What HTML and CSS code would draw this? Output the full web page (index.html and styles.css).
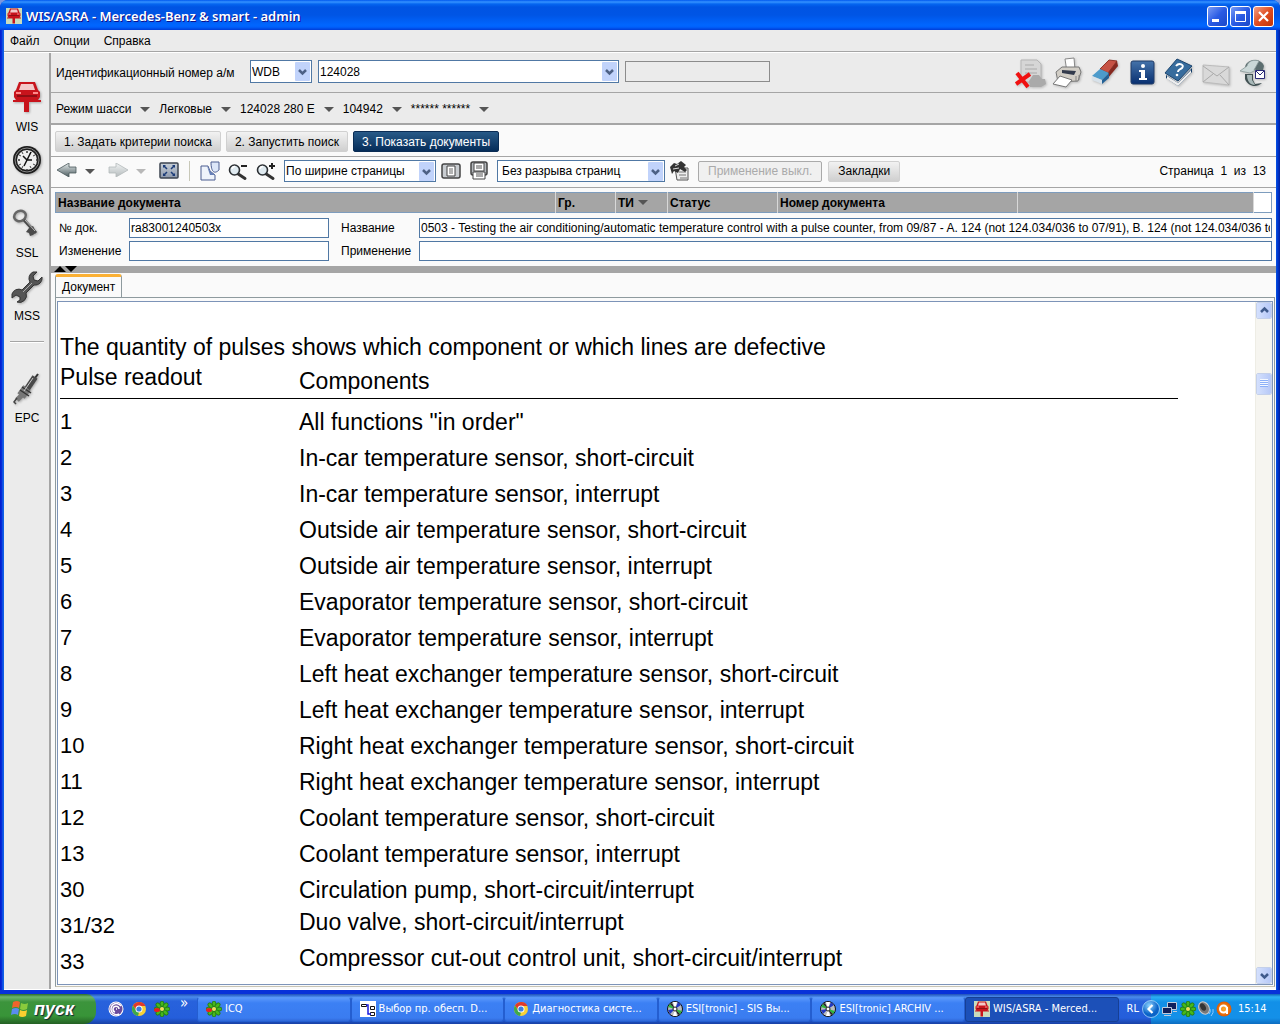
FILE: index.html
```html
<!DOCTYPE html>
<html lang="ru">
<head>
<meta charset="utf-8">
<title>WIS/ASRA</title>
<link rel="stylesheet" href="styles.css">
</head>
<body>
<svg class="defs" width="0" height="0" aria-hidden="true">
  <defs>
    <linearGradient id="steel" x1="0" y1="0" x2="0" y2="1"><stop offset="0" stop-color="#e8eeee"/><stop offset="1" stop-color="#4c5c60"/></linearGradient>
    <linearGradient id="navy" x1="0" y1="0" x2="0" y2="1"><stop offset="0" stop-color="#4573aa"/><stop offset="1" stop-color="#082f70"/></linearGradient>
    <linearGradient id="plate" x1="0" y1="0" x2="0" y2="1"><stop offset="0" stop-color="#c8d0d8"/><stop offset="1" stop-color="#8c98ac"/></linearGradient>
    <radialGradient id="orange"><stop offset="0" stop-color="#ffb030"/><stop offset="1" stop-color="#e05800"/></radialGradient>
    <radialGradient id="sky" cx=".4" cy=".3"><stop offset="0" stop-color="#8fd4ff"/><stop offset="1" stop-color="#0a63c8"/></radialGradient>
    <symbol id="lift" viewBox="0 0 28 32"><path fill="#c8141c" d="M6 1h16l3 8 2 2v5l-2 3h3v2h-12v10h-5v-10H0v-2h3l-2-3v-5l2-2z"/><path fill="#f3c9c9" d="M8 3h12l2 6H6z"/><path fill="#8e0f14" d="M4 14h20v2H4z"/><path fill="#ff8a8a" d="M3 11h5v2H3zm17 0h5v2h-5z"/></symbol>
    <symbol id="flower" viewBox="0 0 16 16"><g fill="#46b81c" stroke="#18690c" stroke-width=".7"><ellipse cx="8" cy="3" rx="2" ry="3"/><ellipse cx="8" cy="13" rx="2" ry="3"/><ellipse cx="3" cy="8" rx="3" ry="2"/><ellipse cx="13" cy="8" rx="3" ry="2"/><g transform="rotate(45 8 8)"><ellipse cx="8" cy="3" rx="2" ry="3"/><ellipse cx="8" cy="13" rx="2" ry="3"/><ellipse cx="3" cy="8" rx="3" ry="2"/><ellipse cx="13" cy="8" rx="3" ry="2"/></g></g><circle cx="8" cy="8" r="2" fill="#f4e04c"/></symbol>
    <symbol id="flower-red" viewBox="0 0 16 16"><use href="#flower"/><ellipse cx="3" cy="9" rx="3" ry="2" fill="#e8201c"/></symbol>
    <symbol id="chrome" viewBox="0 0 16 16"><circle cx="8" cy="8" r="7" fill="#f7d038"/><path fill="#e03a2c" d="M2 4.500A7 7 0 0 1 14.500 5H8L5 9z"/><path fill="#3fa948" d="M2 4.500 5.500 10 8 11.500 7 15A7 7 0 0 1 2 4.500z"/><circle cx="8" cy="8" r="3.500" fill="#fff"/><circle cx="8" cy="8" r="2.600" fill="#3c7de0"/></symbol>
    <symbol id="disc" viewBox="0 0 16 16"><circle cx="8" cy="8" r="7.500" fill="#b8bcc0" stroke="#111"/><path fill="#fff" d="M8 8 6 1h4zM8 8l-2 7h4z"/><path fill="#2bb53c" d="M8 8 1 6l2-3zM8 8l7 2-2 3z"/><path fill="#2238c0" d="M8 8 11 1l3 3zM8 8 1 9l2 4z"/><path fill="#222" d="M8 8 3 3l2-1zM8 8l5 5-2 1z"/><circle cx="8" cy="8" r="2" fill="#fff" stroke="#222"/></symbol>
    <symbol id="magnifier" viewBox="0 0 20 18"><path d="M9.500 10.500 17 15.500" stroke="#333" stroke-width="3" stroke-linecap="round"/><circle cx="6.500" cy="7" r="5" fill="#dfeaf0" stroke="#2b2f33" stroke-width="1.600"/><path d="M4 6a3 3 0 0 1 3-2.500" fill="none" stroke="#fff" stroke-width="1.500"/></symbol>
    <symbol id="arrow-left" viewBox="0 0 20 14"><path d="M0 7 12 0v4h7v6h-7v4z" fill="url(#steel)" stroke="#4a585c" stroke-width=".8"/></symbol>
  </defs>
</svg>

<div class="window">
  <header class="titlebar">
    <svg class="i16" viewBox="0 0 16 16"><path fill="#c9dcbc" d="M0 0h16v16H0z"/><use href="#lift" x="1" y="0" width="14" height="16"/></svg>
    <h1>WIS/ASRA - Mercedes-Benz &amp; smart - admin</h1>
    <div class="controls">
      <button class="ctl" aria-label="Свернуть"><svg viewBox="0 0 19 19"><path fill="#fff" d="M4 12h7v3H4z"/></svg></button>
      <button class="ctl" aria-label="Развернуть"><svg viewBox="0 0 19 19"><path fill="none" stroke="#fff" d="M4.500 5.500h10v9h-10z"/><path fill="#fff" d="M4 4h11v3H4z"/></svg></button>
      <button class="ctl close" aria-label="Закрыть"><svg viewBox="0 0 19 19"><path stroke="#fff" stroke-width="2.200" d="m5 5 9 9m0-9-9 9"/></svg></button>
    </div>
  </header>

  <div class="client">
    <nav class="menubar"><button>Файл</button><button>Опции</button><button>Справка</button></nav>
    <div class="work">
      <nav class="sidebar">
        <a href="#wis"><svg viewBox="0 0 32 34"><use href="#lift" x="2" y="1" width="28" height="32"/></svg>WIS</a>
        <a href="#asra"><svg viewBox="0 0 32 34"><circle cx="16" cy="17" r="14" fill="#1d1d1d"/><circle cx="16" cy="17" r="12" fill="none" stroke="#888"/><circle cx="16" cy="17" r="10" fill="#eee"/><path stroke="#333" stroke-width="1.500" stroke-dasharray="2 16" d="M16 8v20M7 17h20"/><path stroke="#444" d="m11 9 1 2m8-2-1 2M8 12l2 1m14-1-2 1M8 22l2-1m14 1-2-1m-11 4 1-2m8 2-1-2"/><path stroke="#111" stroke-width="1.500" fill="none" d="m12 13 4 4 4-8m-4 8-3 6m3-6h5"/></svg>ASRA</a>
        <a href="#ssl"><svg viewBox="0 0 32 34"><ellipse cx="9" cy="10" rx="6" ry="5" fill="none" stroke="#666" stroke-width="2.500" transform="rotate(-25 9 10)"/><path stroke="#4a4a4a" stroke-width="3" d="m13 14 12 13"/><path fill="#4a4a4a" d="m18 22-3 4 3 1 1 3 3-1 3-3-3-6z"/><path stroke="#bbb" d="m14 14 10 11"/></svg>SSL</a>
        <a href="#mss"><svg viewBox="0 0 32 34"><path fill="#555" stroke="#333" d="M22 3a7 7 0 0 0-3 10l-8 8a7 7 0 0 0-10 4v4l4-3 4 2v3l-3 2a7 7 0 0 0 9-9l8-8a7 7 0 0 0 8-8l-4 4-4-1-1-4 4-4z"/><path stroke="#aaa" d="m12 23 9-9"/></svg>MSS</a>
        <hr>
        <a href="#epc"><svg viewBox="0 0 32 34"><path stroke="#333" stroke-width="2" d="m24 7 3-4"/><path stroke="#4a4a4a" stroke-width="6" d="m16 18 8-12"/><path stroke="#777" stroke-width="9" d="m10 25 6-8"/><path stroke="#333" stroke-width="1.500" d="m11 16 9 6m-11-3 9 6"/><path stroke="#777" stroke-width="5" d="m6 29 5-5"/><path stroke="#444" stroke-width="1.500" fill="none" d="m6 27-3 4 2 2"/><path stroke="#ccc" d="m13 20 9-13"/></svg>EPC</a>
      </nav>

      <main class="main">
        <form class="vin">
          <label for="wmi">Идентификационный номер а/м</label>
          <select id="wmi" class="wmi"><option>WDB</option></select>
          <select class="vin-no" aria-label="Номер"><option>124028</option></select>
          <input class="vin-extra" disabled aria-label="Дополнение">
          <div class="tools">
            <button type="button" aria-label="Удалить"><svg viewBox="0 0 32 32"><path fill="#d6d6d6" stroke="#b5b5b5" d="M6 3h16l4 4v18H6z"/><path stroke="#aaa" d="M10 8h9m-9 4h12m-12 4h12"/><path fill="#aaa" d="m14 24 4-6h6l3 4h3l1 5-5 3H15z"/><path stroke="#f01010" stroke-width="4" d="m2 16 11 14M15 17 1 27"/></svg></button>
            <button type="button" aria-label="Печать"><svg viewBox="0 0 32 32"><path fill="#fff" stroke="#888" d="m13 2 9-1 1 12-8 2z"/><path fill="#d2cec6" stroke="#777" d="m4 15 6-5h17l2 5-3 9-20 1z"/><path fill="#333b4c" d="m10 13 14 1-2 4-12-2z"/><path fill="#fff" stroke="#777" d="m8 19 12 4-6 7-13-3z"/><path stroke="#888" d="M24 19v6m3-7v5"/></svg></button>
            <button type="button" aria-label="Очистить"><svg viewBox="0 0 32 32"><path fill="#c65244" stroke="#8e3428" d="m11 12 9-9 8 1-9 12z"/><path fill="#86281f" d="m19 16 9-12 1 5-10 12z"/><path fill="#4d9bcb" d="m3 19 8-7 9 4-7 7z"/><path fill="#d8e2ea" d="m3 19 10 4v4L3 23z"/><path fill="#236196" d="m13 23 7-7v5l-7 6z"/></svg></button>
            <button type="button" aria-label="Информация"><svg viewBox="0 0 32 32"><rect x="5" y="4" width="23" height="23" rx="2" fill="url(#navy)" stroke="#203c68"/><circle cx="17" cy="9" r="2" fill="#fff"/><path fill="#fff" d="M13 13h6v8h2v2h-8v-2h2v-6h-2z"/></svg></button>
            <button type="button" aria-label="Справка"><svg viewBox="0 0 32 32"><path fill="#123c68" d="m3 18 12 8 14-15v4L15 29 3 21z"/><path fill="#eee" d="m4 19 11 7 13-13v3L15 29 4 22z"/><path fill="#376c9d" stroke="#1c456f" d="M14 2 29 9 15 24 2 16z"/><path fill="none" stroke="#fff" stroke-width="2" d="M13 9c3-4 9-1 6 2-2 2-4 1-4 4"/><circle cx="14" cy="18" r="1.300" fill="#fff"/></svg></button>
            <button type="button" aria-label="Письмо"><svg viewBox="0 0 32 32"><path fill="#d9d9d9" stroke="#bbb" d="m3 8 26 2v18L3 25z"/><path fill="none" stroke="#aaa" d="m3 9 14 10L29 10M3 25l10-8m16 11-9-10"/></svg></button>
            <button type="button" aria-label="Обмен"><svg viewBox="0 0 32 32"><path fill="#5c6e70" d="M8 10C10 1 24 1 27 9l-1 4H14z"/><path fill="#cbd8d8" stroke="#8a9a9a" stroke-width=".8" d="M10 9c1-5 7-7 12-5l-5 9h2l-6 3-10-2z"/><path fill="#405052" d="M8 17h8v6l2 4 7-1c-5 5-14 4-17-4z"/><path fill="#a8b8b8" d="M10 18h5v5l3 5c-5 0-8-4-8-10z"/><path fill="#fff" stroke="#292976" d="M18.500 13.500h9v8h-9z"/><path fill="none" stroke="#292976" d="m19 14 4 4 4-4"/></svg></button>
          </div>
        </form>

        <nav class="crumbs">
          <button>Режим шасси</button><button>Легковые</button><button>124028 280 E</button><button>104942</button><button>****** ******</button>
        </nav>

        <nav class="steps"><button class="btn">1. Задать критерии поиска</button><button class="btn">2. Запустить поиск</button><button class="btn active">3. Показать документы</button></nav>

        <div class="toolbar">
          <button aria-label="Назад"><svg viewBox="0 0 20 20"><use href="#arrow-left" x="0" y="2" width="20" height="14"/></svg></button>
          <button class="drop" aria-label="История назад"></button>
          <button class="dim" aria-label="Вперёд"><svg viewBox="0 0 20 20"><g transform="matrix(-1 0 0 1 20 0)"><use href="#arrow-left" x="0" y="2" width="20" height="14"/></g></svg></button>
          <button class="drop dim" aria-label="История вперёд"></button>
          <button aria-label="Полный экран"><svg viewBox="0 0 20 20"><rect x="1" y="2" width="18" height="15" rx="1" fill="url(#plate)" stroke="#3c4450" stroke-width="1.500"/><path d="m5 5 3 3m7-3-3 3m-7 6 3-3m7 3-3-3" stroke="#1b3b78" stroke-width="1.500"/><path fill="#1b3b78" d="M4 4h3L4 7zm12 0h-3l3 3zM4 15h3l-3-3zm12 0h-3l3-3z"/></svg></button>
          <span class="rule"></span>
          <button aria-label="Страница"><svg viewBox="0 0 20 20"><path fill="#eef3fb" stroke="#4a5c90" d="M1 5h7l2 5 5 4v5H1z"/><path fill="#dce6f8" stroke="#4a5c90" d="M11 1h8v8c-4 4-8 3-8-8z"/><path fill="#6780b8" d="m7 5 3 5 5 4h-5z"/></svg></button>
          <button aria-label="Уменьшить"><svg viewBox="0 0 20 20"><use href="#magnifier" x="0" y="2" width="20" height="18"/><path stroke="#222" stroke-width="2" d="M13 5h6"/></svg></button>
          <button aria-label="Увеличить"><svg viewBox="0 0 20 20"><use href="#magnifier" x="0" y="2" width="20" height="18"/><path stroke="#222" stroke-width="2" d="M13 5h6m-3-3v6"/></svg></button>
          <select class="fit" aria-label="Масштаб"><option>По ширине страницы</option></select>
          <button aria-label="Одна страница"><svg viewBox="0 0 20 20"><rect x="1" y="3" width="18" height="14" rx="2" fill="#c8ccd0" stroke="#444" stroke-width="1.500"/><path fill="#fff" stroke="#444" d="M6 5h8v10H6z"/><path stroke="#666" d="M8 8h4m-4 2h4m-4 2h4"/></svg></button>
          <button aria-label="Непрерывно"><svg viewBox="0 0 20 20"><rect x="2" y="1" width="16" height="13" rx="2" fill="#b4b8bc" stroke="#444" stroke-width="1.500"/><path fill="#fff" stroke="#444" d="M5 2h10v8H5zM4 11h12v7H4z"/><path stroke="#555" d="M7 5h6m-6 2h6m-6 6h7m-7 2h7"/></svg></button>
          <select class="breaks" aria-label="Разрыв страниц"><option>Без разрыва страниц</option></select>
          <button aria-label="Закладка"><svg viewBox="0 0 20 20"><path fill="#eee" stroke="#555" d="M5 7h13v12H7z"/><path stroke="#777" d="M9 11h7m-7 3h7m-6 3h7"/><path fill="#333" d="m0 6 4-4 3 1 4-3 5 4-2 2 3 3-2 2-5-3-2 4-4-2-2 3z"/><path stroke="#ddd" d="m5 5 4-2m-6 5 6-1"/></svg></button>
          <button class="btn off" disabled>Применение выкл.</button>
          <button class="btn">Закладки</button>
          <output>Страница&nbsp; 1&nbsp; из&nbsp; 13</output>
        </div>

        <section class="doc-info">
          <table class="columns">
            <thead><tr><th class="c-name">Название документа</th><th class="c-gr">Гр.</th><th class="c-ti"><span class="sorted">ТИ</span></th><th class="c-st">Статус</th><th class="c-no">Номер документа</th><th></th><td class="c-end"></td></tr></thead>
          </table>
          <div class="fields">
            <label for="f1">№ док.</label><input id="f1" value="ra83001240503x">
            <label for="f2">Название</label><input id="f2" value="0503 - Testing the air conditioning/automatic temperature control with a pulse counter, from 09/87 - A. 124 (not 124.034/036 to 07/91), B. 124 (not 124.034/036 to 07/91)">
            <label for="f3">Изменение</label><input id="f3">
            <label for="f4">Применение</label><input id="f4">
          </div>
        </section>
        <div class="splitter"><svg viewBox="0 0 24 6"><path d="m0 6 6-6 6 6zM11 0h12l-6 6z"/></svg></div>
        <div class="tabs"><button class="tab">Документ</button></div>
        <div class="pane"><div class="viewer">
          <article class="sheet">
            <p>The quantity of pulses shows which component or which lines are defective</p>
            <table class="pulses">
              <thead><tr><th>Pulse readout</th><th class="low">Components</th></tr></thead>
              <tbody>
                <tr><td>1</td><td>All functions "in order"</td></tr>
                <tr><td>2</td><td>In-car temperature sensor, short-circuit</td></tr>
                <tr><td>3</td><td>In-car temperature sensor, interrupt</td></tr>
                <tr><td>4</td><td>Outside air temperature sensor, short-circuit</td></tr>
                <tr><td>5</td><td>Outside air temperature sensor, interrupt</td></tr>
                <tr><td>6</td><td>Evaporator temperature sensor, short-circuit</td></tr>
                <tr><td>7</td><td>Evaporator temperature sensor, interrupt</td></tr>
                <tr><td>8</td><td>Left heat exchanger temperature sensor, short-circuit</td></tr>
                <tr><td>9</td><td>Left heat exchanger temperature sensor, interrupt</td></tr>
                <tr><td>10</td><td>Right heat exchanger temperature sensor, short-circuit</td></tr>
                <tr><td>11</td><td>Right heat exchanger temperature sensor, interrupt</td></tr>
                <tr><td>12</td><td>Coolant temperature sensor, short-circuit</td></tr>
                <tr><td>13</td><td>Coolant temperature sensor, interrupt</td></tr>
                <tr><td>30</td><td>Circulation pump, short-circuit/interrupt</td></tr>
                <tr class="raised"><td>31/32</td><td>Duo valve, short-circuit/interrupt</td></tr>
                <tr class="raised"><td>33</td><td>Compressor cut-out control unit, short-circuit/interrupt</td></tr>
              </tbody>
            </table>
          </article>
          <div class="scrollbar">
            <button aria-label="Вверх"><svg viewBox="0 0 15 15"><path fill="none" stroke="#3f5a8c" stroke-width="2.500" d="m4 9 3.500-3.500L11 9"/></svg></button>
            <div class="track"><div class="thumb"></div></div>
            <button aria-label="Вниз"><svg viewBox="0 0 15 15"><path fill="none" stroke="#3f5a8c" stroke-width="2.500" d="m4 6 3.500 3.500L11 6"/></svg></button>
          </div>
        </div></div>
      </main>
    </div>
  </div>
</div>

<footer class="taskbar">
  <button class="start"><svg viewBox="0 0 20 18"><path fill="#f0642c" d="M3 2q4-2 7 0L9 8q-3-2-7 0z"/><path fill="#8acb3c" d="M11 3q4 2 7 0l-1 6q-4 2-7 0z"/><path fill="#5a8cf0" d="M2 9q4-2 7 0l-1 6q-3-2-7 0z"/><path fill="#fcd030" d="M10 10q4 2 7 0l-1 6q-4 2-7 0z"/></svg>пуск</button>
  <div class="quick">
    <a href="#bt" aria-label="BitTorrent"><svg class="i16" viewBox="0 0 16 16"><circle cx="8" cy="8" r="7.500" fill="#fff"/><circle cx="8" cy="8" r="6.500" fill="#6a4a9c"/><path fill="none" stroke="#fff" stroke-width="1.500" d="M13 5a5.500 5.500 0 1 0-2 8M11 8a3 3 0 1 0-4 3M9 8H8"/></svg></a>
    <a href="#chrome" aria-label="Chrome"><svg class="i16"><use href="#chrome"/></svg></a>
    <a href="#icq" aria-label="ICQ"><svg class="i16"><use href="#flower-red"/></svg></a>
    <span class="more">»</span>
  </div>
  <div class="tasks">
    <button><svg class="i16"><use href="#flower-red"/></svg><span>ICQ</span></button>
    <button><svg class="i16" viewBox="0 0 16 16"><path fill="#fff" d="M0 0h16v16H0z"/><path fill="none" stroke="#111" d="M1.500 3.500h5v2h-5zM10.500 5.500h4v3h-4zm0 6h4v3h-4z"/><path fill="none" stroke="#1818e0" stroke-width="1.500" d="M6 4h2v9h3"/></svg><span>Выбор пр. обесп. D...</span></button>
    <button><svg class="i16"><use href="#chrome"/></svg><span>Диагностика систе...</span></button>
    <button><svg class="i16"><use href="#disc"/></svg><span>ESI[tronic] - SIS Вы...</span></button>
    <button><svg class="i16"><use href="#disc"/></svg><span>ESI[tronic] ARCHIV ...</span></button>
    <button class="current"><svg class="i16" viewBox="0 0 16 16"><path fill="#c9dcbc" d="M0 0h16v16H0z"/><use href="#lift" x="1" y="0" width="14" height="16"/></svg><span>WIS/ASRA - Merced...</span></button>
  </div>
  <span class="lang">RL</span>
  <div class="tray">
    <button aria-label="Скрытые значки"><svg viewBox="0 0 18 18"><circle cx="9" cy="9" r="8.500" fill="url(#sky)" stroke="#bfe4ff" stroke-width=".7"/><path fill="none" stroke="#fff" stroke-width="2.200" d="m10.500 5-4 4 4 4"/></svg></button>
    <svg class="i16" viewBox="0 0 16 16"><path fill="#10205c" stroke="#c0ccdc" d="M5.500 1.500h9v7h-9z"/><path fill="#10205c" stroke="#c0ccdc" d="M.500 6.500h9v6h-9z"/><path fill="#c0ccdc" d="M2 14h7v1H2zM11 10h4v1h-4z"/></svg>
    <svg class="i16"><use href="#flower"/></svg>
    <svg class="i16" viewBox="0 0 16 16"><ellipse cx="6" cy="7" rx="5" ry="6.500" fill="#777" stroke="#ccc" transform="rotate(-30 6 7)"/><ellipse cx="5" cy="6" rx="2.500" ry="4" fill="#333" transform="rotate(-30 5 6)"/><path fill="none" stroke="#8ec8ff" d="M11 13q2-2 1-5m1 7q3-3 2-7"/></svg>
    <svg class="i16" viewBox="0 0 16 16"><circle cx="8" cy="8" r="7.500" fill="url(#orange)"/><circle cx="7.500" cy="8" r="3.500" fill="none" stroke="#fff" stroke-width="2"/><path stroke="#fff" stroke-width="2" d="M11 6v7"/></svg>
    <time>15:14</time>
  </div>
</footer>
</body>
</html>
```
FILE: styles.css
```css
* { box-sizing: border-box; }
body {
  margin: 0;
  min-height: 100vh;
  display: flex;
  flex-direction: column;
  background: #7a97df;
  color: #000;
  font: 12px/16px "Liberation Sans", Arial, sans-serif;
}
button, input, select { font: inherit; color: inherit; margin: 0; padding: 0; border-radius: 0; }
button { border: 0; background: none; display: flex; align-items: center; white-space: nowrap; }
svg { display: block; flex: none; }
.defs { position: absolute; }
.i16 { width: 16px; height: 16px; }

/* Window frame */
.window {
  flex: 1;
  display: flex;
  flex-direction: column;
  padding: 0 4px;
  border-bottom: 4px solid #0831d9;
  background: linear-gradient(90deg, #0019cf, #0831d9 2px, #166aee 3px, #0855dd 4px, #0855dd calc(100% - 4px), #0041dd calc(100% - 3px), #001ea0);
  border-radius: 8px 8px 0 0;
}
.titlebar {
  height: 30px;
  margin: 0 -4px;
  padding: 2px 6px 0;
  display: flex;
  align-items: center;
  border-radius: 8px 8px 0 0;
  background: linear-gradient(#0058ee, #3593ff 2px, #0566f0 4px, #0054e3 7px, #0055e5 15px, #0066ff 25px, #0061fc 27px, #003dd7);
  color: #fff;
}
.titlebar h1 {
  flex: 1;
  margin: 0 0 0 4px;
  font: 600 13px/16px "Noto Sans", sans-serif;
  text-shadow: 1px 1px #0f1089;
}
.controls { display: flex; gap: 2px; }
.ctl {
  width: 21px;
  height: 21px;
  border: 1px solid #fff;
  border-radius: 3px;
  background: linear-gradient(135deg, #7a9cf5, #2a5be4 50%, #1a48c8);
}
.ctl svg { width: 19px; height: 19px; }
.close { background: linear-gradient(135deg, #f0a088, #e04c20 50%, #c03408); }

.client { flex: 1; display: flex; flex-direction: column; background: #ebebeb; border-bottom: 1px solid #fff; }
.menubar { display: flex; gap: 14px; height: 22px; padding-left: 6px; border-bottom: 1px solid #a5a5a5; }
.work { flex: 1; display: flex; border-top: 1px solid #fff; }

/* Sidebar */
.sidebar {
  width: 47px;
  padding: 27px 0 0 1px;
  display: flex;
  flex-direction: column;
  align-items: center;
  border-right: 2px solid #a5a5a5;
}
.sidebar a { display: flex; flex-direction: column; align-items: center; height: 63px; color: #000; text-decoration: none; }
.sidebar svg { width: 32px; height: 34px; margin-bottom: 5px; filter: drop-shadow(1px 1px 1px #aaa); }
.sidebar hr { width: 34px; margin: 9px 0 28px; border: 0; border-top: 1px solid #a5a5a5; border-bottom: 1px solid #fff; }

.main { flex: 1; min-width: 0; display: flex; flex-direction: column; background: #fafafa; }

/* Drop-down lists and text boxes */
select {
  appearance: none;
  height: 23px;
  padding: 0 20px 0 1px;
  border: 1px solid #5078a4;
  background: #fff url("data:image/svg+xml,%3Csvg xmlns='http://www.w3.org/2000/svg' width='15' height='19'%3E%3Crect width='15' height='19' rx='1' fill='%23c1d3fb'/%3E%3Cpath d='M4 8l3.500 3.500L11 8' fill='none' stroke='%234d6185' stroke-width='2.500'/%3E%3C/svg%3E") no-repeat right 1px center;
}
input { border: 1px solid #5078a4; background: #fff; }

.vin { display: flex; align-items: center; height: 40px; padding: 0 7px 0 5px; background: #ebebeb; border-bottom: 1px solid #a5a5a5; }
.vin label { width: 194px; white-space: nowrap; }
.wmi { width: 62px; margin: 0 6px 2px 0; }
.vin-no { width: 301px; margin: 0 6px 2px 0; }
.vin-extra { width: 145px; height: 21px; margin-bottom: 2px; border: 1px solid #8c8c8c; background: #ebebeb; }
.tools { display: flex; gap: 5px; margin-left: auto; }
.tools svg { width: 32px; height: 32px; filter: drop-shadow(1px 1px 1px #bbb); }

.crumbs { display: flex; gap: 9px; height: 32px; padding: 2px 0 0 5px; background: #ebebeb; border-bottom: 2px solid #a5a5a5; }
.crumbs button::after, .sorted::after, .drop::before {
  content: "";
  border: 5px solid transparent;
  border-top-color: #555;
  border-bottom: 0;
}
.crumbs button::after { margin-left: 9px; }
.sorted { display: flex; align-items: center; gap: 4px; }

.steps { display: flex; align-items: center; gap: 5px; height: 32px; padding: 2px 4px 0; border-bottom: 1px solid #a5a5a5; }
.btn {
  height: 21px;
  padding: 0 9px;
  border: 1px solid #d0d0d0;
  border-radius: 2px;
  background: linear-gradient(#f2f2f2, #cfcfcf);
}
.steps .btn { padding: 0 8px; }
.steps .active, .active { border-color: #0a2c54; background: linear-gradient(#285a88, #052c58); color: #fff; }
.off { border-color: #aaa; background: #f0f0f0; color: #aaa; }

.toolbar { display: flex; align-items: center; gap: 8px; height: 31px; padding: 0 10px 2px 6px; border-bottom: 1px solid #a5a5a5; }
.toolbar button > svg { width: 20px; height: 20px; }
.toolbar select { height: 22px; }
.toolbar .btn + .btn { margin-left: -2px; }
.drop { width: 15px; }
.dim { opacity: .4; }
.rule { width: 1px; height: 20px; margin: 0 2px; background: #c8c8b8; }
.fit { width: 152px; margin-right: -3px; }
.breaks { width: 168px; padding-left: 4px; margin-right: -3px; }
.toolbar output { margin-left: auto; white-space: nowrap; }

/* Document details */
.doc-info { padding: 4px 4px 5px; }
.columns { width: 100%; table-layout: fixed; border-collapse: collapse; border: 1px solid #7d9cbd; background: #a5a5a5; }
.columns th { height: 20px; padding: 0 2px; border-right: 1px solid #d8d8d8; text-align: left; font-weight: bold; white-space: nowrap; }
.c-name { width: 500px; }
.c-gr { width: 60px; }
.c-ti { width: 52px; }
.c-st { width: 110px; }
.c-no { width: 240px; }
.c-end { width: 18px; background: #fff; }
.fields { display: grid; grid-template-columns: 66px 200px 82px minmax(0, 1fr); gap: 3px 4px; padding: 5px 0 0 4px; align-items: center; }
.fields label:nth-of-type(even) { padding-left: 8px; }
.fields label { white-space: nowrap; }
.fields input { width: 100%; height: 20px; padding: 0 1px; }

.splitter { height: 7px; padding-left: 3px; background: #a5a5a5; }
.splitter svg { width: 24px; height: 6px; }
.tabs { display: flex; height: 24px; padding: 1px 0 0 4px; }
.tab {
  height: 23px;
  padding: 0 6px;
  border: 1px solid #8e9a9e;
  border-top: 3px solid #fbb034;
  border-bottom: 0;
  border-radius: 3px 3px 0 0;
}
.pane { flex: 1; display: flex; margin: 0 1px 2px 4px; padding: 3px 1px 1px; border: 1px solid #8e9a9e; border-bottom-color: #c8c4b4; }
.viewer { flex: 1; display: flex; border: 1px solid #7d94b8; background: #fff; }

/* Document text */
.sheet { flex: 1; padding: 31px 77px 0 2px; font-size: 23px; line-height: 28px; }
.sheet p { margin: 0; }
.pulses { width: 100%; border-collapse: collapse; }
.pulses th { width: 239px; height: 37px; padding: 2px 0 0; border-bottom: 1px solid #000; font-weight: normal; text-align: left; vertical-align: top; }
.pulses th + th { width: auto; }
.pulses .low { padding-top: 6px; }
.pulses td { height: 36px; padding: 0; }
.pulses tbody tr:first-child td { height: 42px; padding-top: 6px; }
.pulses td:first-child { font-size: 22px; }
.raised td + td { padding-bottom: 8px; }

.scrollbar { width: 17px; display: flex; flex-direction: column; background: #f6f5f0; border-left: 1px solid #eeede5; }
.scrollbar button, .thumb { height: 17px; border: 1px solid #fff; border-radius: 2px; background: linear-gradient(90deg, #d4e0fd, #b6c8f7); outline: 1px solid #c4d0ea; outline-offset: -1px; }
.scrollbar svg { width: 15px; height: 15px; }
.track { flex: 1; padding-top: 54px; }
.thumb { height: 22px; padding: 5px 3px; }
.thumb::before { content: ""; display: block; height: 8px; background: repeating-linear-gradient(#f4f8ff 0 1px, #8cb0f8 1px 2px); }

/* Taskbar */
.taskbar {
  display: flex;
  height: 30px;
  background: linear-gradient(#1f4fb8, #4a8cec 3px, #2862dc 7px, #245edb 24px, #1941a5);
  color: #fff;
  font: 11px/16px "DejaVu Sans Condensed", "DejaVu Sans", sans-serif;
}
.start {
  width: 96px;
  gap: 4px;
  padding: 0 0 0 10px;
  border-radius: 0 10px 12px 0;
  background: linear-gradient(#2c6c2c, #6cb46c 3px, #3c943c 8px, #389438 22px, #246024);
  font: italic bold 18px/24px "Liberation Sans", Arial, sans-serif;
  text-shadow: 1px 1px 1px #123;
}
.start svg { width: 20px; height: 18px; }
.quick { width: 101px; display: flex; align-items: center; gap: 7px; padding-left: 12px; }
.more { padding: 0 0 12px 3px; font-size: 15px; }
.tasks { flex: 1; min-width: 0; display: flex; align-items: center; }
.tasks button {
  flex: 1;
  min-width: 0;
  height: 25px;
  gap: 3px;
  padding: 0 8px;
  border: 1px solid #245ed0;
  border-top-color: #5898f8;
  border-radius: 3px;
  background: linear-gradient(#5a98fc, #3c80f4 5px, #3a7cf0 20px, #3068d8);
}
.tasks span { overflow: hidden; white-space: nowrap; }
.tasks .current { background: #1c50b8; border-color: #163f94; }
.lang { padding: 7px 12px 0 8px; }
.tray { width: 129px; display: flex; align-items: center; gap: 2px; background: linear-gradient(#0f60b8, #2cb0f4 3px, #1290e8 8px, #1490e8 24px, #0c6cc0); }
.tray button { margin-left: -9px; }
.tray button svg { width: 18px; height: 18px; }
.tray time { margin-left: 4px; }
```
